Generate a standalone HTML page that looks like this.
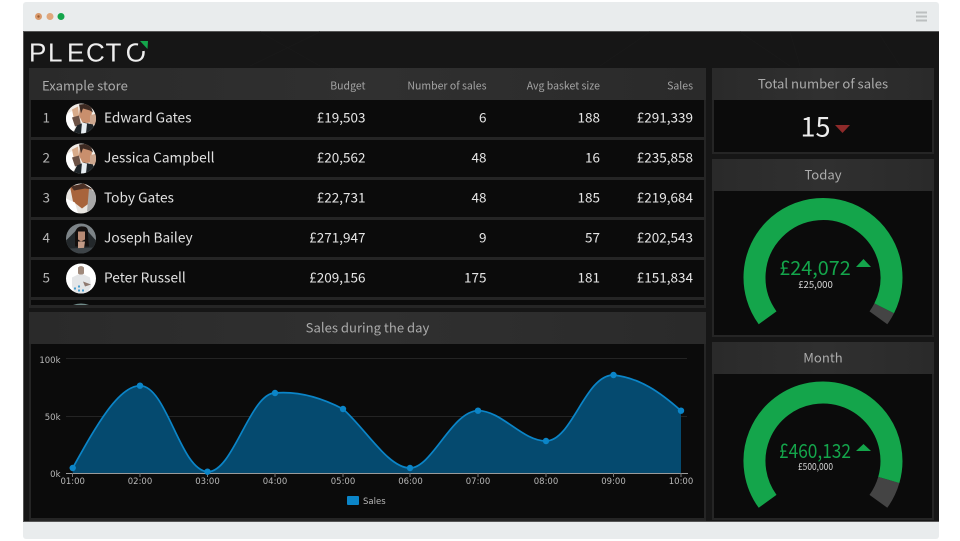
<!DOCTYPE html>
<html><head><meta charset="utf-8"><title>Plecto</title>
<style>
html,body{margin:0;padding:0;background:#fff;width:960px;height:541px;overflow:hidden}
svg{display:block}
text{font-family:"Noto Sans CJK JP","Liberation Sans",sans-serif}
.h{font-size:10.5px;fill:#a4a4a4;text-anchor:end}
.t{font-size:13.5px;fill:#e6e6e6;text-anchor:end}
.n{font-size:13.5px;fill:#b4b4b4}
.m{font-size:13.7px;fill:#e0e0e0}
.c{font-size:13.1px;fill:#ababab;text-anchor:middle}
.a{font-family:"DejaVu Sans","Liberation Sans",sans-serif;font-size:8.5px;fill:#b8b8b8}
.g{font-size:19.8px;fill:#14a54b;text-anchor:middle}
.s{font-size:9.6px;fill:#d4d4d4;text-anchor:middle}
</style></head>
<body>
<svg width="960" height="541" viewBox="0 0 960 541" xmlns="http://www.w3.org/2000/svg">
<defs>
<clipPath id="av"><circle cx="0" cy="0" r="15"/></clipPath>
<linearGradient id="hd" x1="0" y1="0" x2="1" y2="0"><stop offset="0" stop-color="#2a2a2a"/><stop offset=".5" stop-color="#303030"/><stop offset="1" stop-color="#2a2a2a"/></linearGradient>
<g id="man" clip-path="url(#av)">
<rect x="-15" y="-15" width="30" height="30" fill="#f1ece6"/>
<path d="M-15-4-6-9-3 3-9 15H-15Z" fill="#fff"/>
<path d="M-9-9-3-12-2-3-7 1Z" fill="#d8ab8a"/>
<path d="M-9-1-2-3 0 6-6 8Z" fill="#6b5145"/>
<path d="M-1-13 8-13 11-6 9 4 2 5-2-3Z" fill="#c98f6d"/>
<path d="M-2-14 9-15 12-6 9-8 2-10 0-5Z" fill="#3d2a22"/>
<path d="M9-3 15-5V6L9 6Z" fill="#cda78f"/>
<path d="M-8 15-4 7 3 4 12 6 15 15Z" fill="#1d2327"/>
<path d="M1 4 6 5 5 15H0Z" fill="#e8eef2"/>
</g>
</defs>

<!-- browser frame -->
<rect x="23" y="2" width="916" height="537" rx="3" fill="#e9eced"/>
<rect x="23" y="31" width="916" height="491" fill="#161616"/>
<rect x="23" y="31" width="916" height="1" fill="#555"/>
<rect x="23" y="31" width="1" height="491" fill="#555"/>
<rect x="23" y="521" width="916" height="1" fill="#555"/>
<circle cx="38.5" cy="16.5" r="3.5" fill="#d99a6c"/>
<circle cx="38.5" cy="16.5" r="1.2" fill="#9a5a30"/>
<circle cx="50" cy="16.5" r="3.5" fill="#e0a77c"/>
<circle cx="61" cy="16.5" r="3.5" fill="#14a54b"/>
<path d="M916 12.5h11M916 16.5h11M916 20.5h11" stroke="#bcbfc0" stroke-width="2"/>

<!-- logo -->
<text x="29 48 67 86 105.5 125.7" y="61.5" font-size="26" fill="#eeeeee" style='font-family:"Liberation Sans",sans-serif'>PLECTO</text>
<path d="M137 52 139 38H152L150 50Z" fill="#161616"/>
<path d="M140 41H148L147.5 49Z" fill="#14a54b"/>

<!-- faint poly bg -->
<g stroke="#191919" stroke-width="1" fill="none">
<path d="M260 32 320 66M320 32 250 66M740 32 790 66M790 32 800 66M880 35 900 66M650 32 600 66"/>
</g>

<!-- table panel -->
<rect x="29" y="68" width="677" height="240" fill="#252525"/>
<rect x="29" y="68" width="677" height="32" fill="url(#hd)"/>
<rect x="31" y="100" width="673" height="37" fill="#0b0b0b"/>
<rect x="31" y="140" width="673" height="37" fill="#0b0b0b"/>
<rect x="31" y="180" width="673" height="37" fill="#0b0b0b"/>
<rect x="31" y="220" width="673" height="37" fill="#0b0b0b"/>
<rect x="31" y="260" width="673" height="37" fill="#0b0b0b"/>
<rect x="31" y="300" width="673" height="5" fill="#0b0b0b"/>

<text x="42" y="90.5" class="c" style="text-anchor:start">Example store</text>
<text x="365.5" y="89.5" class="h">Budget</text>
<text x="486.5" y="89.5" class="h">Number of sales</text>
<text x="600" y="89.5" class="h">Avg basket size</text>
<text x="693" y="89.5" class="h">Sales</text>

<text x="42.5" y="122.5" class="n">1</text>
<use href="#man" x="81" y="118.5"/>
<text x="104" y="122.5" class="m">Edward Gates</text>
<text x="365.5" y="122.5" class="t">£19,503</text><text x="486.5" y="122.5" class="t">6</text><text x="600" y="122.5" class="t">188</text><text x="693" y="122.5" class="t">£291,339</text>

<text x="42.5" y="162.5" class="n">2</text>
<use href="#man" x="81" y="158.5"/>
<text x="104" y="162.5" class="m">Jessica Campbell</text>
<text x="365.5" y="162.5" class="t">£20,562</text><text x="486.5" y="162.5" class="t">48</text><text x="600" y="162.5" class="t">16</text><text x="693" y="162.5" class="t">£235,858</text>

<text x="42.5" y="202.5" class="n">3</text>
<g transform="translate(81 198.5)"><g clip-path="url(#av)">
<rect x="-15" y="-15" width="30" height="30" fill="#e9e6e2"/>
<path d="M-11-12 3-15 11-8 9 4 1 10-8 3Z" fill="#a8643c"/>
<path d="M-10-12 2-15 12-9 4-10-7-8Z" fill="#4b3025"/>
<path d="M8-10 15-6V10L6 13Z" fill="#a9a9a9"/>
<path d="M-15 0-6 4-3 15H-15Z" fill="#fff"/>
</g></g>
<text x="104" y="202.5" class="m">Toby Gates</text>
<text x="365.5" y="202.5" class="t">£22,731</text><text x="486.5" y="202.5" class="t">48</text><text x="600" y="202.5" class="t">185</text><text x="693" y="202.5" class="t">£219,684</text>

<text x="42.5" y="242.5" class="n">4</text>
<g transform="translate(81 238.5)"><g clip-path="url(#av)">
<rect x="-15" y="-15" width="30" height="30" fill="#7d8488"/>
<path d="M-15 2-5-8 6-8 15 2V15H-15Z" fill="#23282b"/>
<path d="M-6-6Q-4-13 2-12 8-12 7-4L8 8H-6Z" fill="#14100f"/>
<path d="M-3-7 4-7 4 1 0 3-3 1Z" fill="#b88a74"/>
<path d="M-3 3 4 3 3 10H-3Z" fill="#c29a86"/>
<path d="M-12 10 12 9 12 15H-12Z" fill="#3e4448"/>
</g></g>
<text x="104" y="242.5" class="m">Joseph Bailey</text>
<text x="365.5" y="242.5" class="t">£271,947</text><text x="486.5" y="242.5" class="t">9</text><text x="600" y="242.5" class="t">57</text><text x="693" y="242.5" class="t">£202,543</text>

<text x="42.5" y="282.5" class="n">5</text>
<g transform="translate(81 278.5)"><g clip-path="url(#av)">
<rect x="-15" y="-15" width="30" height="30" fill="#fff"/>
<path d="M-3-11Q0-14 3-11L3-5 0-3-3-5Z" fill="#a08a7c"/>
<path d="M-9-1-3-4 3-4 9-1 10 8 6 15H-6L-9 8Z" fill="#e4e6e8"/>
<path d="M-7 9h2v2h-2zM-3 11h2v2h-2zM1 11h2v2h-2zM-3 7h2v2h-2z" fill="#4a9fd0"/>
<path d="M2 3 10 6 4 8Z" fill="#8f7a70"/>
</g></g>
<text x="104" y="282.5" class="m">Peter Russell</text>
<text x="365.5" y="282.5" class="t">£209,156</text><text x="486.5" y="282.5" class="t">175</text><text x="600" y="282.5" class="t">181</text><text x="693" y="282.5" class="t">£151,834</text>
<path d="M73 305Q81 302 89 305Z" fill="#6f8a88"/>

<!-- chart panel -->
<rect x="29" y="312" width="677" height="209" fill="#252525"/>
<rect x="29" y="312" width="677" height="32" fill="url(#hd)"/>
<rect x="31" y="344" width="673" height="174" fill="#0b0b0b"/>
<text x="367.5" y="332.5" class="c">Sales during the day</text>
<path d="M66 358.5H687M66 416.5H687" stroke="#242424" stroke-width="1"/>
<path d="M72.7 468C95 428 118 386 140 385.7C167 386 180 470 207.5 471.7C233 473 250 393 275 393C298 391 322 398 343 409C365 428 388 468 410 468C432 468 452 411 478 410.7C502 410.7 522 441 546 441C572 441 585 375 613.5 375C640 378 660 392 681 410.7V473H72.7Z" fill="#054a6f"/>
<path d="M72.7 468C95 428 118 386 140 385.7C167 386 180 470 207.5 471.7C233 473 250 393 275 393C298 391 322 398 343 409C365 428 388 468 410 468C432 468 452 411 478 410.7C502 410.7 522 441 546 441C572 441 585 375 613.5 375C640 378 660 392 681 410.7" fill="none" stroke="#0b85c8" stroke-width="1.7"/>
<path d="M66 473.5H688" stroke="#9a9a9a" stroke-width="1"/>
<path d="M72.5 473V477M140 473V477M207.5 473V477M275 473V477M343 473V477M410 473V477M478 473V477M546 473V477M613.5 473V477M681 473V477" stroke="#777" stroke-width="1"/>
<g fill="#0b85c8">
<circle cx="72.7" cy="468" r="3.2"/><circle cx="140" cy="385.7" r="3.2"/><circle cx="207.5" cy="471.7" r="3.2"/><circle cx="275" cy="393" r="3.2"/><circle cx="343" cy="409" r="3.2"/><circle cx="410" cy="468" r="3.2"/><circle cx="478" cy="410.7" r="3.2"/><circle cx="546" cy="441" r="3.2"/><circle cx="613.5" cy="375" r="3.2"/><circle cx="681" cy="410.7" r="3.2"/>
</g>
<g>
<text class="a" x="60.5" y="363" text-anchor="end">100k</text>
<text class="a" x="60.5" y="420" text-anchor="end">50k</text>
<text class="a" x="60.5" y="477" text-anchor="end">0k</text>
<text class="a" x="72.7" y="484" text-anchor="middle">01:00</text>
<text class="a" x="140" y="484" text-anchor="middle">02:00</text>
<text class="a" x="207.5" y="484" text-anchor="middle">03:00</text>
<text class="a" x="275" y="484" text-anchor="middle">04:00</text>
<text class="a" x="343" y="484" text-anchor="middle">05:00</text>
<text class="a" x="410.5" y="484" text-anchor="middle">06:00</text>
<text class="a" x="478" y="484" text-anchor="middle">07:00</text>
<text class="a" x="546" y="484" text-anchor="middle">08:00</text>
<text class="a" x="613.5" y="484" text-anchor="middle">09:00</text>
<text class="a" x="681" y="484" text-anchor="middle">10:00</text>
<text class="a" x="363" y="504">Sales</text>
</g>
<rect x="347" y="496" width="12" height="9" rx="1" fill="#0b85c8"/>

<!-- total panel -->
<rect x="712" y="68" width="222" height="86" fill="#252525"/>
<rect x="712" y="68" width="222" height="32" fill="url(#hd)"/>
<rect x="714" y="100" width="218" height="52" fill="#0b0b0b"/>
<text x="823" y="88.5" class="c">Total number of sales</text>
<text x="815.5" y="136.5" font-size="27" fill="#ececec" text-anchor="middle">15</text>
<path d="M835 125H850L842.5 133Z" fill="#8e2a2a"/>

<!-- today -->
<rect x="712" y="159" width="222" height="178" fill="#252525"/>
<rect x="712" y="159" width="222" height="32" fill="url(#hd)"/>
<rect x="714" y="191" width="218" height="144" fill="#0b0b0b"/>
<text x="823" y="179.5" class="c">Today</text>
<path d="M884.2 308.3A68.5 68.5 0 0 1 878.4 317.8" fill="none" stroke="#444" stroke-width="22"/>
<path d="M767.6 317.8A68.5 68.5 0 1 1 884.2 308.3" fill="none" stroke="#14a54b" stroke-width="22"/>
<text x="815" y="275" class="g">£24,072</text>
<path d="M856 267 863.5 259 871 267Z" fill="#14a54b"/>
<text x="815.5" y="288" class="s">£25,000</text>

<!-- month -->
<rect x="712" y="342" width="222" height="178" fill="#252525"/>
<rect x="712" y="342" width="222" height="32" fill="url(#hd)"/>
<rect x="714" y="374" width="218" height="144" fill="#0b0b0b"/>
<text x="823" y="362.5" class="c">Month</text>
<path d="M888.8 479.9A68.5 68.5 0 0 1 878.4 501.3" fill="none" stroke="#444" stroke-width="22"/>
<path d="M767.6 501.3A68.5 68.5 0 1 1 888.8 479.9" fill="none" stroke="#14a54b" stroke-width="22"/>
<text x="815" y="458" class="g" textLength="72" lengthAdjust="spacingAndGlyphs">£460,132</text>
<path d="M856 451 863.5 444 871 451Z" fill="#14a54b"/>
<text x="815.5" y="470" class="s" textLength="35" lengthAdjust="spacingAndGlyphs">£500,000</text>
</svg>
</body></html>
